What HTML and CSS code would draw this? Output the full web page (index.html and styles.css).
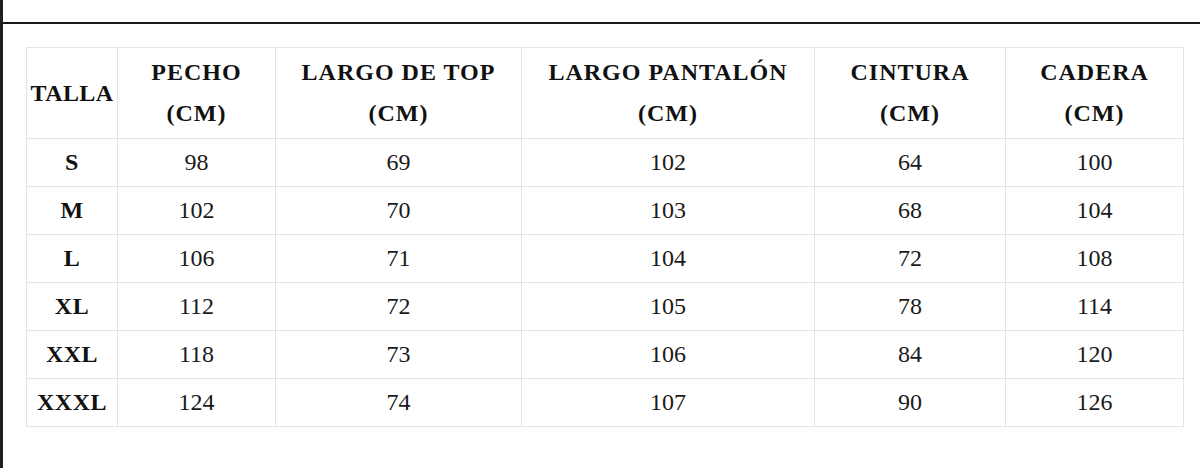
FILE: index.html
```html
<!DOCTYPE html>
<html lang="es">
<head>
<meta charset="utf-8">
<title>Tabla de tallas</title>
<link rel="stylesheet" href="styles.css">
</head>
<body>
<div class="page">
  <div class="edge"></div>
  <main class="content">
    <div class="rule"></div>
    <table class="sizes">
      <colgroup>
        <col class="c1"><col class="c2"><col class="c3"><col class="c4"><col class="c5"><col class="c6">
      </colgroup>
      <thead>
        <tr>
          <th>TALLA</th>
          <th>PECHO<br>(CM)</th>
          <th>LARGO DE TOP<br>(CM)</th>
          <th>LARGO PANTALÓN<br>(CM)</th>
          <th>CINTURA<br>(CM)</th>
          <th>CADERA<br>(CM)</th>
        </tr>
      </thead>
      <tbody>
        <tr><th>S</th><td>98</td><td>69</td><td>102</td><td>64</td><td>100</td></tr>
        <tr><th>M</th><td>102</td><td>70</td><td>103</td><td>68</td><td>104</td></tr>
        <tr><th>L</th><td>106</td><td>71</td><td>104</td><td>72</td><td>108</td></tr>
        <tr><th>XL</th><td>112</td><td>72</td><td>105</td><td>78</td><td>114</td></tr>
        <tr><th>XXL</th><td>118</td><td>73</td><td>106</td><td>84</td><td>120</td></tr>
        <tr><th>XXXL</th><td>124</td><td>74</td><td>107</td><td>90</td><td>126</td></tr>
      </tbody>
    </table>
  </main>
</div>
</body>
</html>
```
FILE: styles.css
```css
html, body {
  margin: 0;
  padding: 0;
  background: #ffffff;
}

.page {
  display: flex;
  height: 468px;
  font-family: "Liberation Serif", "Times New Roman", serif;
  color: #111111;
}

.edge {
  width: 3px;
  flex: 0 0 3px;
  background: #231f1d;
}

.content {
  flex: 1;
  padding-top: 22px;
}

.rule {
  height: 2px;
  background: #1a1a1a;
}

.sizes {
  margin: 23px 0 0 23px;
  border-collapse: collapse;
  table-layout: fixed;
  width: 1157px;
}

.c1 { width: 91px; }
.c2 { width: 158px; }
.c3 { width: 246px; }
.c4 { width: 293px; }
.c5 { width: 191px; }
.c6 { width: 178px; }

.sizes th,
.sizes td {
  border: 1px solid #e4e4e4;
  text-align: center;
  vertical-align: middle;
  padding: 0;
}

.sizes thead th {
  height: 90px;
  font-size: 24px;
  font-weight: bold;
  line-height: 41px;
  letter-spacing: 1px;
}

.sizes thead th:first-child {
  letter-spacing: 0.4px;
}

.sizes tbody th {
  height: 47px;
  font-size: 24px;
  font-weight: bold;
  letter-spacing: 0.5px;
}

.sizes tbody td {
  height: 47px;
  font-size: 24px;
  font-weight: normal;
  color: #1a1a1a;
}
```
